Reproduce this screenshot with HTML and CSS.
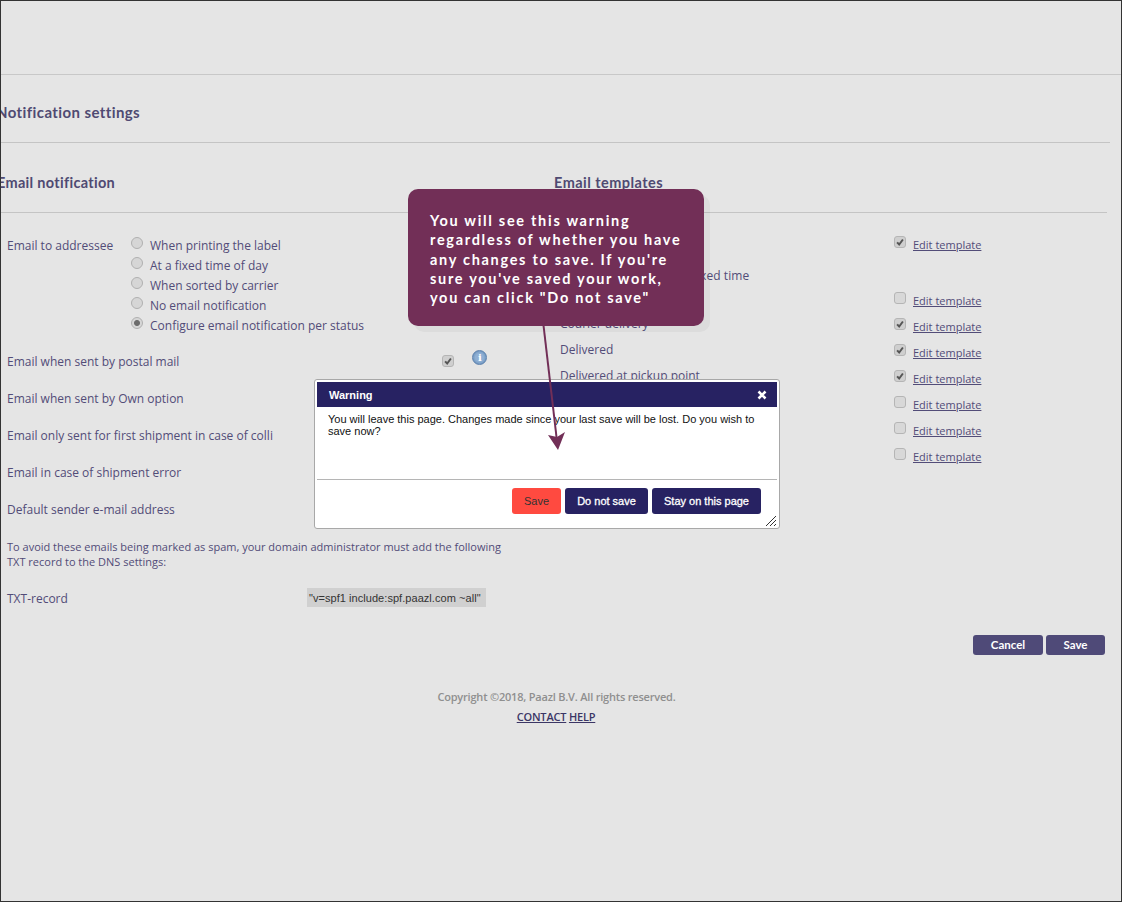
FILE: index.html
```html
<!DOCTYPE html>
<html lang="en">
<head>
<meta charset="utf-8">
<title>Notification settings</title>
<link rel="stylesheet" href="styles.css">
</head>
<body>
<div class="frame">
  <header class="topbar"></header>
  <main class="content">
    <h1 class="page-title">Notification settings</h1>
    <div class="columns">
      <section class="col-left">
        <h2 class="section-title">Email notification</h2>
        <div class="addressee">
          <div class="label">Email to addressee</div>
          <ul class="radios">
            <li><span class="radio"></span>When printing the label</li>
            <li><span class="radio"></span>At a fixed time of day</li>
            <li><span class="radio"></span>When sorted by carrier</li>
            <li><span class="radio"></span>No email notification</li>
            <li><span class="radio on"></span>Configure email notification per status</li>
          </ul>
        </div>
        <div class="opt-row">
          <span class="label">Email when sent by postal mail</span>
          <span class="check on"><svg viewBox="0 0 12 12"><path d="M2.500 6.500 5 9l4.500-6" /></svg></span>
          <span class="info">i</span>
        </div>
        <div class="opt-row"><span class="label">Email when sent by Own option</span></div>
        <div class="opt-row"><span class="label">Email only sent for first shipment in case of colli</span></div>
        <div class="opt-row"><span class="label">Email in case of shipment error</span></div>
        <div class="opt-row"><span class="label">Default sender e-mail address</span></div>
        <p class="note">To avoid these emails being marked as spam, your domain administrator must add the following TXT record to the DNS settings:</p>
        <div class="txt-row">
          <span class="label">TXT-record</span>
          <span class="txt-value">"v=spf1 include:spf.paazl.com ~all"</span>
        </div>
      </section>
      <section class="col-right">
        <h2 class="section-title tmpl-title">Email templates</h2>
        <div class="tmpl-list">
          <div class="tmpl first"><span class="tmpl-name"></span><span class="check on"><svg viewBox="0 0 12 12"><path d="M2.500 6.500 5 9l4.500-6" /></svg></span><a href="#">Edit template</a></div>
          <div class="tmpl-text">Label printed, sent at a fixed time</div>
          <div class="tmpl"><span class="tmpl-name"></span><span class="check"></span><a href="#">Edit template</a></div>
          <div class="tmpl"><span class="tmpl-name">Courier delivery</span><span class="check on"><svg viewBox="0 0 12 12"><path d="M2.500 6.500 5 9l4.500-6" /></svg></span><a href="#">Edit template</a></div>
          <div class="tmpl"><span class="tmpl-name">Delivered</span><span class="check on"><svg viewBox="0 0 12 12"><path d="M2.500 6.500 5 9l4.500-6" /></svg></span><a href="#">Edit template</a></div>
          <div class="tmpl"><span class="tmpl-name">Delivered at pickup point</span><span class="check on"><svg viewBox="0 0 12 12"><path d="M2.500 6.500 5 9l4.500-6" /></svg></span><a href="#">Edit template</a></div>
          <div class="tmpl"><span class="tmpl-name"></span><span class="check"></span><a href="#">Edit template</a></div>
          <div class="tmpl"><span class="tmpl-name"></span><span class="check"></span><a href="#">Edit template</a></div>
          <div class="tmpl"><span class="tmpl-name"></span><span class="check"></span><a href="#">Edit template</a></div>
        </div>
      </section>
    </div>
    <div class="actions">
      <button class="btn">Cancel</button>
      <button class="btn">Save</button>
    </div>
    <footer class="footer">
      <div class="copyright">Copyright ©2018, Paazl B.V. All rights reserved.</div>
      <div class="foot-links"><a href="#">CONTACT</a> <a href="#">HELP</a></div>
    </footer>
  </main>

  <div class="dialog">
    <div class="dialog-head"><span>Warning</span>
      <svg class="dialog-x" viewBox="0 0 10 10"><path d="M1.500 1.500l7 7M8.500 1.500l-7 7" /></svg>
    </div>
    <div class="dialog-body">You will leave this page. Changes made since your last save will be lost. Do you wish to save now?</div>
    <div class="dialog-foot">
      <button class="dbtn">Save</button>
      <button class="dbtn">Do not save</button>
      <button class="dbtn">Stay on this page</button>
    </div>
    <svg class="resizer" viewBox="0 0 12 12"><path d="M1 11 11 1M5 11l6-6M9 11l2-2" /></svg>
  </div>

  <div class="callout">You will see this warning regardless of whether you have any changes to save. If you're sure you've saved your work, you can click "Do not save"</div>
  <svg class="arrow" viewBox="0 0 40 140" width="40" height="140">
    <path class="shaft" d="M8 0 21.500 116" />
    <path class="head" d="M23 129 13 114 22 116 30 111Z" />
  </svg>
</div>
</body>
</html>
```
FILE: styles.css
```css
* { box-sizing: border-box; }
html, body { margin: 0; padding: 0; }
body {
  width: 1122px;
  height: 902px;
  overflow: hidden;
  font-family: "Open Sans", "Liberation Sans", sans-serif;
  font-size: 12px;
  color: #524c78;
  background: #e5e5e5;
}
.frame {
  position: relative;
  width: 1122px;
  height: 902px;
  overflow: hidden;
  border: 1px solid #333;
  background: #e5e5e5;
}
.topbar { height: 74px; border-bottom: 1px solid #c8c8c8; }
.page-title {
  margin: 0 11px 0 -5px;
  height: 68px;
  padding-top: 27px;
  border-bottom: 1px solid #c4c4c4;
  font: 700 15px/20px "Lato", sans-serif;
  color: #4f4a72;
  letter-spacing: .4px;
}
.columns { display: grid; grid-template-columns: 553px 553px; }
.section-title {
  margin: 0 0 0 -4px;
  height: 70px;
  padding-top: 30px;
  border-bottom: 1px solid #c4c4c4;
  font: 700 14.500px/20px "Lato", sans-serif;
  color: #4f4a72;
  letter-spacing: .3px;
}
.tmpl-title { margin-left: 0; letter-spacing: .45px; }
.addressee { display: flex; padding: 22px 0 0 6px; }
.addressee .label { width: 124px; line-height: 22px; }
.label { font-size: 12px; }
.radios { list-style: none; margin: 0; padding: 0; }
.radios li { display: flex; align-items: center; height: 20px; }
.radio {
  width: 12px; height: 12px; margin-right: 7px; margin-top: -5px;
  border-radius: 50%;
  border: 1px solid #b0b0b0;
  background: #d6d6d6;
}
.radio.on { background: radial-gradient(circle, #6c6c6c 0 2.500px, #d6d6d6 3.500px); }
.opt-row { display: flex; align-items: center; height: 37px; padding-left: 6px; }
.addressee + .opt-row { margin-top: 8px; }
.check {
  display: block; width: 12px; height: 12px;
  border: 1px solid #b5b5b5; border-radius: 3px;
  background: #d8d8d8;
}
.check.on { background: #cfcfcf; }
.check svg { display: block; width: 10px; height: 10px; }
.check path { fill: none; stroke: #555; stroke-width: 2.400; }
.opt-row .check { margin-left: 263px; margin-top: -2px; }
.info {
  width: 15px; height: 15px; margin-left: 18px; margin-top: -8px;
  border-radius: 50%;
  background: radial-gradient(circle, #8fb0d4 0 4px, #6f95bf 7px);
  border: 1px solid #5b80ad;
  color: #fff;
  font: 700 10px/13px "DejaVu Serif", serif;
  text-align: center;
}
.note { margin: 11px 0 0 6px; width: 510px; line-height: 15px; font-size: 11px; }
.txt-row { display: flex; align-items: center; height: 20px; margin: 18px 0 0 6px; }
.txt-row .label { width: 300px; margin-top: 2px; }
.txt-value {
  width: 179px; height: 19px; padding-left: 2px;
  white-space: nowrap;
  background: #d0d0d0;
  color: #333;
  font: 11px/21px "Liberation Sans", sans-serif;
  letter-spacing: .05px;
}
.tmpl-list { padding: 18px 0 0 6px; }
.tmpl { display: flex; height: 26px; align-items: center; }
.tmpl-text { height: 30px; padding-top: 6px; line-height: 26px; letter-spacing: .06px; }
.tmpl-name { width: 334px; margin-top: -6px; }
.tmpl a { margin-left: 7px; color: #524c78; font-size: 11px; }
.tmpl .check { margin-top: -4px; }
.actions { display: flex; justify-content: flex-end; gap: 3px; padding-right: 16px; margin-top: 28px; }
.btn {
  height: 20px; border: 0; border-radius: 3px; padding: 0;
  background: #4f4a78; color: #fff;
  font: 700 11.500px/20px "Lato", sans-serif;
}
.btn:first-child { width: 70px; }
.btn:last-child { width: 59px; }
.footer { margin-top: 32px; text-align: center; font-size: 11px; font-weight: 600; letter-spacing: -.2px; }
.copyright { width: 1111px; color: #8f8f8f; line-height: 20px; }
.foot-links { width: 1110px; line-height: 20px; }
.foot-links a { color: #3b3665; }

.dialog {
  position: absolute; left: 313px; top: 378px;
  width: 466px; height: 150px;
  border: 1px solid #a8a8a8; border-radius: 3px;
  background: #fff; padding: 2px;
  font-family: "Liberation Sans", sans-serif;
}
.dialog-head {
  display: flex; justify-content: space-between; align-items: center;
  height: 25px; padding: 0 10px 0 12px;
  background: #272262; color: #fff;
  font-weight: 700; font-size: 11px;
}
.dialog-x { width: 10px; height: 10px; }
.dialog-x path { fill: none; stroke: #fff; stroke-width: 2.600; }
.dialog-body { height: 73px; padding: 6px 11px; color: #111; font-size: 11px; line-height: 12px; border-bottom: 1px solid #b5b5b5; }
.dialog-foot { display: flex; justify-content: flex-end; gap: 4px; padding: 8px 16px 0 0; }
.dbtn {
  height: 26px; border: 0; border-radius: 3px; padding: 0;
  background: #272262; color: #fff;
  font: 400 11px/26px "Liberation Sans", sans-serif;
  -webkit-text-stroke: .3px #fff;
}
.dbtn:nth-child(1) { width: 49px; background: #ff4a40; color: #333; -webkit-text-stroke: 0; }
.dbtn:nth-child(2) { width: 83px; }
.dbtn:nth-child(3) { width: 109px; }
.resizer { position: absolute; right: 2px; bottom: 1px; width: 12px; height: 12px; }
.resizer path { fill: none; stroke: #333; stroke-width: 1; }

.callout {
  position: absolute; left: 407px; top: 188px;
  width: 296px; height: 137px;
  padding: 22px 16px 0 22px;
  border-radius: 10px;
  background: #722f57;
  box-shadow: 6px 6px 0 rgba(0, 0, 0, .04);
  color: #fff;
  font: 700 14.500px/19.300px "Lato", sans-serif;
  letter-spacing: 1.700px;
}
.arrow { position: absolute; left: 534px; top: 320px; overflow: visible; }
.shaft { fill: none; stroke: #722f57; stroke-width: 2; }
.head { fill: #722f57; }
```
